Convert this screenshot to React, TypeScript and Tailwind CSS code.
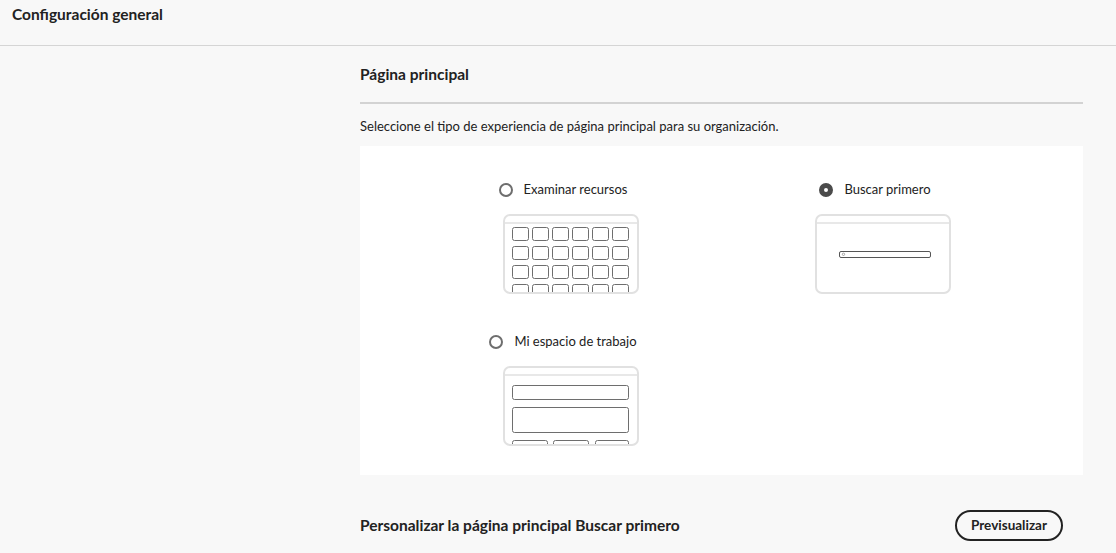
import React from "react";

const FRAME = "#e1e1e1";
const CELL = "#6e6e6e";

function Frame({ id, children }: { id: string; children: React.ReactNode }) {
  return (
    <svg width="136" height="80" viewBox="0 0 136 80" className="block">
      <defs>
        <clipPath id={id}>
          <rect x="2" y="2" width="132" height="76" rx="5" />
        </clipPath>
      </defs>
      <rect x="1" y="1" width="134" height="78" rx="6" fill="#fff" />
      <g clipPath={`url(#${id})`}>{children}</g>
      <line x1="1" y1="9" x2="135" y2="9" stroke={FRAME} strokeWidth="1.5" />
      <rect x="1" y="1" width="134" height="78" rx="6" fill="none" stroke={FRAME} strokeWidth="2" />
    </svg>
  );
}

function BrowseThumb() {
  const cols = [0, 1, 2, 3, 4, 5];
  const rows = [0, 1, 2, 3];
  return (
    <Frame id="clip-browse">
      {rows.map((r) =>
        cols.map((c) => (
          <rect
            key={`${r}-${c}`}
            x={9.5 + c * 20}
            y={13.5 + r * 19}
            width="16"
            height="13"
            rx="2"
            fill="none"
            stroke={CELL}
            strokeWidth="1"
          />
        ))
      )}
    </Frame>
  );
}

function SearchThumb() {
  return (
    <Frame id="clip-search">
      <rect x="24.5" y="37.5" width="91" height="6" rx="1.5" fill="none" stroke="#555" strokeWidth="1" />
      <circle cx="28.5" cy="40.3" r="1.2" fill="none" stroke="#777" strokeWidth="0.6" />
    </Frame>
  );
}

function WorkspaceThumb() {
  return (
    <Frame id="clip-work">
      <rect x="9.5" y="19.5" width="116" height="14" rx="2" fill="none" stroke={CELL} strokeWidth="1" />
      <rect x="9.5" y="41.5" width="116" height="25" rx="2" fill="none" stroke={CELL} strokeWidth="1" />
      <rect x="9.5" y="74.5" width="35" height="14" rx="2" fill="none" stroke={CELL} strokeWidth="1" />
      <rect x="50.5" y="74.5" width="35" height="14" rx="2" fill="none" stroke={CELL} strokeWidth="1" />
      <rect x="92.5" y="74.5" width="33" height="14" rx="2" fill="none" stroke={CELL} strokeWidth="1" />
    </Frame>
  );
}

function Option({
  label,
  checked,
  children,
}: {
  label: string;
  checked?: boolean;
  children: React.ReactNode;
}) {
  return (
    <div className="flex flex-col items-center">
      <label className="mr-4 flex h-5 items-center gap-[11px] whitespace-nowrap">
        <span
          className={
            checked
              ? "box-border h-[14px] w-[14px] rounded-full border-[5px] border-[#4b4b4b] bg-white"
              : "box-border h-[14px] w-[14px] rounded-full border-2 border-[#6e6e6e] bg-white"
          }
        />
        <span className="text-[13px] text-[#222]">{label}</span>
      </label>
      <div className="mt-[14px]">{children}</div>
    </div>
  );
}

export default function App() {
  return (
    <div className="min-h-screen w-full bg-[#f8f8f8] font-['Lato','Liberation_Sans',sans-serif] text-[#222]">
      {/* Header */}
      <header className="h-[46px] border-b border-[#d5d5d5] px-3 pt-[4px]">
        <h1 className="text-[15.5px] leading-5 font-bold text-[#222]">Configuración general</h1>
      </header>

      <main className="ml-[360px] w-[723px]">
        <h2 className="mt-[18px] text-[15.5px] leading-5 font-bold">Página principal</h2>
        <div className="mt-[18px] h-[2px] bg-[#d3d3d3]" />
        <p className="mt-[13px] text-[13px] leading-[18px]">
          Seleccione el tipo de experiencia de página principal para su organización.
        </p>

        <section className="mt-[11px] h-[329px] bg-white pt-[34px] pl-[55px]">
          <div className="grid grid-cols-[312px_312px] gap-y-[38px]">
            <Option label="Examinar recursos">
              <BrowseThumb />
            </Option>
            <Option label="Buscar primero" checked>
              <SearchThumb />
            </Option>
            <Option label="Mi espacio de trabajo">
              <WorkspaceThumb />
            </Option>
          </div>
        </section>

        <div className="mt-[35px] flex h-[31px] items-center justify-between pr-5">
          <h2 className="text-[15.5px] font-bold">Personalizar la página principal Buscar primero</h2>
          <button className="h-[31px] w-[108px] rounded-full border-2 border-[#222] bg-transparent text-[13.5px] font-bold text-[#222]">
            Previsualizar
          </button>
        </div>
      </main>
    </div>
  );
}
